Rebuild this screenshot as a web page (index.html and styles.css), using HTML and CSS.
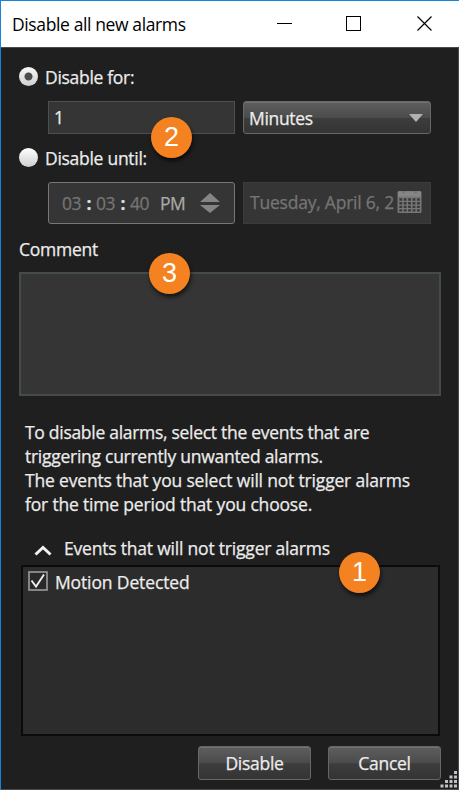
FILE: index.html
```html
<!DOCTYPE html>
<html lang="en">
<head>
<meta charset="utf-8">
<title>Disable all new alarms</title>
<link rel="stylesheet" href="styles.css">
</head>
<body>
<div class="window">
  <header class="titlebar">
    <span class="title">Disable all new alarms</span>
    <svg class="controls" width="156" height="16" viewBox="0 0 156 16" fill="none" stroke="#000" shape-rendering="crispEdges">
      <path d="M0 7.5h15M69.500 .5h14v14h-14z"/>
      <path d="M140.500 .5l14 14M154.500 .5l-14 14" shape-rendering="auto" stroke-width="1.15"/>
    </svg>
  </header>
  <main class="content">
    <div class="option"><span class="radio checked"></span><span class="t-for">Disable for:</span></div>
    <div class="fields short">
      <div class="input">1</div>
      <div class="select"><span class="t-min">Minutes</span><span class="arrow"></span></div>
      <span class="badge two">2</span>
    </div>
    <div class="option until"><span class="radio"></span><span class="t-until">Disable until:</span></div>
    <div class="fields tall">
      <div class="time">
        <span class="num">03</span><b>:</b><span class="num">03</span><b>:</b><span class="num">40</span><span class="pm">PM</span>
        <svg width="20" height="20" viewBox="0 0 20 20" fill="#858585"><path d="M0 9L10 0l10 9zM0 12h20l-10 8z"/></svg>
      </div>
      <div class="date">
        <span class="t-date">Tuesday, April 6, 2</span>
        <svg width="25" height="24" viewBox="0 0 25 24">
          <rect x=".5" y="1" width="24" height="22" rx="1.500" fill="#777"/>
          <path d="M1 1.500h4v2h3v-2h9v2h3v-2h4v5H1z" fill="#868686"/>
          <path d="M2.300 9.500h20.600M2.300 13.200h20.600M2.300 16.900h20.600M2.300 20.400h20.600" stroke="#3b3b3b" stroke-width="2.400" stroke-dasharray="2.900 1.500"/>
        </svg>
      </div>
    </div>
    <div class="comment-label"><span class="t-comment">Comment</span><span class="badge three">3</span></div>
    <div class="comment"></div>
    <p class="help"><span class="h1">To disable alarms, select the events that are</span><span class="h2">triggering currently unwanted alarms.</span><span class="h3">The events that you select will not trigger alarms</span><span class="h4">for the time period that you choose.</span></p>
    <div class="expander">
      <svg width="18" height="11" viewBox="0 0 18 11" fill="none" stroke="#f2f2f2" stroke-width="3"><path d="M1.500 9.500L9 2.500l7.500 7"/></svg>
      <span class="t-events">Events that will not trigger alarms</span>
      <span class="badge one">1</span>
    </div>
    <div class="list">
      <svg width="20" height="20" viewBox="0 0 20 20" fill="none"><rect x="1" y="1" width="18" height="18" fill="#292929" stroke="#a3a3a3" stroke-width="1.500"/><path d="M3.500 9.500l4.500 6L16 3.500" stroke="#eee" stroke-width="1.900"/></svg>
      <span class="t-motion">Motion Detected</span>
    </div>
    <footer class="actions">
      <div class="button"><span class="t-disable">Disable</span></div>
      <div class="button"><span class="t-cancel">Cancel</span></div>
    </footer>
  </main>
  <svg class="grip" width="18" height="18" viewBox="0 0 18 18" fill="#bfc2ca"><path d="M14 0h3v3h-3zM14 4.500h3v3h-3zM14 9h3v3h-3zM14 13.500h3v3h-3zM9.500 4.500h3v3h-3zM9.500 9h3v3h-3zM9.500 13.500h3v3h-3zM5 9h3v3H5zM5 13.500h3v3H5zM.5 13.500h3v3h-3z"/></svg>
</div>
</body>
</html>
```
FILE: styles.css
```css
* { box-sizing: border-box; }
body { margin: 0; font-family: "Open Sans", "Noto Sans", sans-serif; font-size: 17.5px; line-height: 24px; color: #ececec; }
span { white-space: nowrap; }
.window { position: relative; width: 459px; height: 790px; overflow: hidden; background: #1f1f1f; border-top: 1px solid #1883d7; border-left: 1px solid #1883d7; display: flex; flex-direction: column; }
.titlebar { height: 46px; flex: none; background: #fff; color: #000; display: flex; align-items: center; justify-content: space-between; padding: 0 26px 0 11px; }
.title { letter-spacing: -.38px; margin-top: -1px; }
.controls { display: block; }
.content { flex: 1; border: 1px solid #4a4a4a; border-left: 0; padding: 18px 17px 0 18px; -webkit-text-stroke: .25px currentColor; }
.option { height: 24px; display: flex; align-items: center; gap: 7px; }
.until { margin-top: 13px; }
.t-for, .t-until { margin-top: -2px; }
.radio { width: 19px; height: 19px; border-radius: 50%; background: linear-gradient(#fff, #cfcfcf); flex: none; margin-top: -3px; }
.checked { background: radial-gradient(circle, #4c4c4c 0 3.500px, transparent 4.500px), linear-gradient(#f8f8f8, #d0d0d0); }
.fields { position: relative; display: flex; gap: 8px; padding-left: 29px; }
.fields > div { height: 100%; }
.short { height: 33px; margin-top: 11px; }
.tall { height: 42px; margin-top: 11px; }
.input { width: 187px; background: #353535; border: 1.500px solid #4b5052; padding: 3px 5px; }
.select { width: 188px; display: flex; align-items: center; justify-content: space-between; padding: 1px 7px 0 5px; }
.select, .button { border: 1px solid #676767; border-radius: 3px; background: linear-gradient(#5e5e5e 0, #4b4b4b 50%, #3d3d3d 52%, #343434 100%); box-shadow: inset 0 1px #727272; }
.arrow { border: 7px solid transparent; border-top: 8px solid #b1b1b1; border-bottom: 0; margin-top: -1px; }
.time { width: 187px; border: 1.500px solid #777; border-radius: 3px; background: #353535; display: flex; align-items: center; padding: 0 14px 0 13px; }
.time b { width: 14px; text-align: center; color: #ddd; }
.num { width: 20px; color: #757575; letter-spacing: -.5px; }
.pm { margin-left: 10px; color: #aaa; letter-spacing: -.6px; }
.time svg { margin: 0 0 0 auto; }
.date { width: 188px; background: #353535; border: 1px solid #3b3b3b; display: flex; align-items: center; justify-content: space-between; padding: 0 8px 2px 6px; color: #757575; }
.comment-label { position: relative; height: 24px; margin-top: 13px; }
.comment { height: 124px; margin-top: 11px; background: #353535; border: 2px solid #454b4d; }
.help { margin: 24px 0 0 6px; height: 96px; }
.help span { display: block; }
.expander { position: relative; height: 24px; margin-top: 20px; display: flex; align-items: center; gap: 12px; padding-left: 15px; }
.expander svg { margin-top: 4px; }
.list { height: 171px; margin: 5px 1px 0 2px; background: #2c2c2c; border: 2px solid #0b0b0b; display: flex; align-items: flex-start; gap: 7px; padding: 4px 5px; }
.t-motion { letter-spacing: -.13px; margin-top: -1px; }
.actions { display: flex; justify-content: flex-end; gap: 17px; margin-top: 10px; }
.button { width: 113px; height: 34px; display: flex; align-items: center; justify-content: center; }
.badge { position: absolute; width: 41px; height: 41px; border-radius: 50%; background: #f58220; color: #fff; font: 27px/41px "Liberation Sans", sans-serif; -webkit-text-stroke: 0; text-align: center; box-shadow: 1px 3px 4px rgba(0,0,0,.65); z-index: 2; }
.two { left: 132px; top: 16px; }
.three { left: 130px; top: 16px; }
.one { left: 320px; top: 16px; }
.grip { position: absolute; right: 1px; bottom: 1px; }
.t-for { letter-spacing: -.3px; }
.t-until { letter-spacing: -.28px; }
.t-min { letter-spacing: -.33px; }
.t-comment { letter-spacing: -.25px; }
.h1 { letter-spacing: -.29px; }
.h2 { letter-spacing: -.27px; }
.h3, .h4 { letter-spacing: -.18px; }
.t-events { letter-spacing: -.2px; }
.t-disable, .t-cancel { letter-spacing: -.28px; }
.t-date { letter-spacing: -.22px; }
```
